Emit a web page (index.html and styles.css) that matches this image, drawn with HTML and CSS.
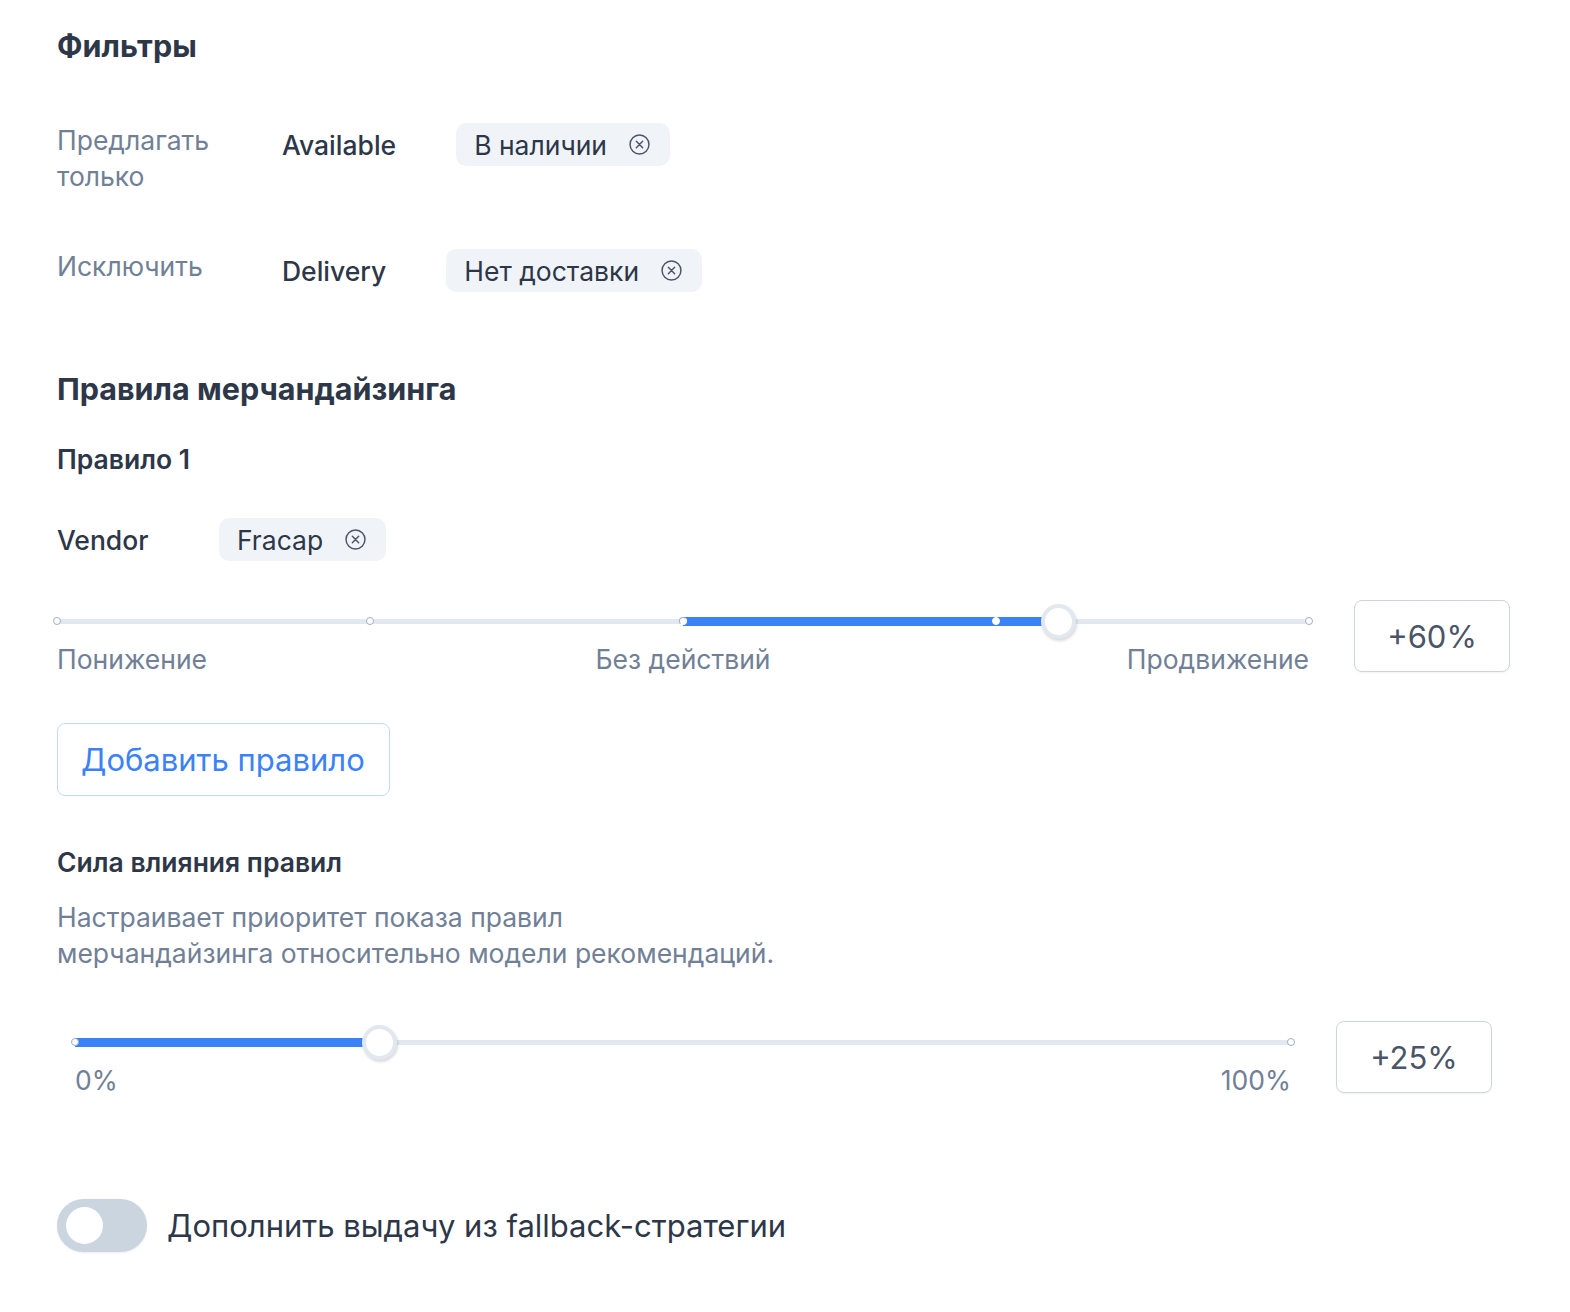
FILE: index.html
```html
<!DOCTYPE html>
<html lang="ru">

<head>
  <meta charset="UTF-8">
  <meta name="viewport" content="width=device-width, initial-scale=1.0">
  <title>Фильтры и правила</title>
  <link rel="stylesheet" href="styles.css">
</head>

<body>
  <div class="page">
    <h2 class="section-title">Фильтры</h2>

    <div class="filter-row">
      <div class="filter-label">Предлагать только</div>
      <div class="filter-value">
        <span class="field-name">Available</span>
        <span class="chip">В наличии
          <svg class="chip-x" viewBox="0 0 20 20"><circle cx="10" cy="10" r="9" /><path d="M7 7l6 6M13 7l-6 6" /></svg>
        </span>
      </div>
    </div>

    <div class="filter-row">
      <div class="filter-label">Исключить</div>
      <div class="filter-value">
        <span class="field-name">Delivery</span>
        <span class="chip">Нет доставки
          <svg class="chip-x" viewBox="0 0 20 20"><circle cx="10" cy="10" r="9" /><path d="M7 7l6 6M13 7l-6 6" /></svg>
        </span>
      </div>
    </div>

    <h2 class="section-title rules-title">Правила мерчандайзинга</h2>
    <h3 class="rule-title">Правило 1</h3>

    <div class="vendor-row">
      <span class="field-name vendor-name">Vendor</span>
      <span class="chip">Fracap
        <svg class="chip-x" viewBox="0 0 20 20"><circle cx="10" cy="10" r="9" /><path d="M7 7l6 6M13 7l-6 6" /></svg>
      </span>
    </div>

    <div class="slider-row">
      <div class="slider">
        <div class="track-wrap">
          <div class="track">
            <div class="fill" style="left: 50%; width: 30%;"></div>
            <span class="dot" style="left: 0%;"></span>
            <span class="dot" style="left: 25%;"></span>
            <span class="dot half" style="left: 50%;"></span>
            <span class="dot on" style="left: 75%;"></span>
            <span class="dot" style="left: 100%;"></span>
            <span class="thumb" style="left: 80%;"></span>
          </div>
        </div>
        <div class="slider-labels three">
          <span>Понижение</span>
          <span>Без действий</span>
          <span>Продвижение</span>
        </div>
      </div>
      <div class="value-box">+60%</div>
    </div>

    <button class="add-rule">Добавить правило</button>

    <h3 class="rule-title power-title">Сила влияния правил</h3>
    <p class="description">Настраивает приоритет показа правил<br>мерчандайзинга относительно модели рекомендаций.</p>

    <div class="slider-row power-row">
      <div class="slider">
        <div class="track-wrap">
          <div class="track">
            <div class="fill" style="left: 0%; width: 25%;"></div>
            <span class="dot" style="left: 0%;"></span>
            <span class="dot" style="left: 100%;"></span>
            <span class="thumb" style="left: 25%;"></span>
          </div>
        </div>
        <div class="slider-labels">
          <span>0%</span>
          <span>100%</span>
        </div>
      </div>
      <div class="value-box">+25%</div>
    </div>

    <label class="toggle-row">
      <span class="toggle"><span class="knob"></span></span>
      <span class="toggle-text">Дополнить выдачу из fallback-стратегии</span>
    </label>
  </div>
</body>

</html>
```

FILE: styles.css
```css
body {
  margin: 0;
  font-family: Inter, "Noto Sans", sans-serif;
  color: #2d3748;
  background-color: #fff;
}

.page {
  width: 1453px;
  padding: 28px 0 40px 57px;
}

.section-title {
  margin: 0;
  font-size: 30.5px;
  line-height: 36px;
  font-weight: 700;
}

.filter-row {
  display: flex;
  align-items: flex-start;
  gap: 60px;
  margin-top: 58px;
}

.filter-row + .filter-row {
  margin-top: 54px;
}

.filter-label {
  width: 165px;
  font-size: 26.5px;
  line-height: 36px;
  color: #718096;
}

.filter-value {
  display: flex;
  align-items: center;
  gap: 60px;
  height: 43px;
  margin-top: 1px;
}

.field-name {
  font-size: 26.5px;
  font-weight: 500;
}

.chip {
  display: inline-flex;
  align-items: center;
  gap: 22px;
  height: 43px;
  padding: 0 20px 0 18px;
  border-radius: 10px;
  background-color: #f0f4f8;
  font-size: 26.5px;
  color: #2d3748;
}

.chip-x {
  width: 21px;
  height: 21px;
  fill: none;
  stroke: #4a5568;
  stroke-width: 1.4;
  stroke-linecap: round;
}

.rules-title {
  margin-top: 79px;
}

.rule-title {
  margin: 36px 0 0;
  font-size: 26.5px;
  line-height: 32px;
  font-weight: 600;
}

.vendor-row {
  display: flex;
  align-items: center;
  margin-top: 43px;
}

.vendor-name {
  width: 162px;
}

/* slider */
.slider-row {
  display: flex;
  align-items: flex-start;
  gap: 45px;
  margin-top: 42px;
}

.slider {
  flex: 1;
}

.track-wrap {
  height: 36px;
  display: flex;
  align-items: center;
}

.track {
  position: relative;
  width: 100%;
  height: 5px;
  background-color: #e2e8f0;
  border-radius: 3px;
}

.fill {
  position: absolute;
  top: -2px;
  height: 9px;
  background-color: #3b82f6;
}

.dot {
  position: absolute;
  top: 50%;
  width: 8px;
  height: 8px;
  margin: -4px 0 0 -4px;
  box-sizing: border-box;
  border: 1px solid #a0aec0;
  border-radius: 50%;
  background-color: #fff;
}

.dot.on {
  border-color: #fff;
}

.dot.half {
  border-color: #a0aec0 #fff #fff #a0aec0;
}

.thumb {
  position: absolute;
  top: 50%;
  width: 35px;
  height: 35px;
  margin: -17.5px 0 0 -17.5px;
  box-sizing: border-box;
  border: 4px solid #e2e8f0;
  border-radius: 50%;
  background-color: #fff;
  box-shadow: 1px 2px 3px rgba(0, 0, 0, 0.15);
}

.slider-labels {
  display: flex;
  justify-content: space-between;
  margin-top: 2px;
  font-size: 26.5px;
  line-height: 36px;
  color: #718096;
}

.slider-labels.three {
  display: grid;
  grid-template-columns: 1fr auto 1fr;
}

.slider-labels.three span:last-child {
  justify-self: end;
}

.value-box {
  width: 156px;
  height: 72px;
  margin-top: -3px;
  box-sizing: border-box;
  display: flex;
  align-items: center;
  justify-content: center;
  border: 1px solid #cbd5e0;
  border-radius: 8px;
  box-shadow: 0 1px 2px rgba(0, 0, 0, 0.05);
  font-size: 31px;
  color: #4a5568;
}

.add-rule {
  display: block;
  margin-top: 46px;
  height: 73px;
  padding: 0 24px 0 23px;
  border: 1px solid #bfdbfe;
  border-radius: 8px;
  background-color: #fff;
  font-family: inherit;
  font-size: 31px;
  color: #3b82f6;
  cursor: pointer;
}

.power-title {
  margin-top: 50px;
}

.description {
  margin: 21px 0 0;
  font-size: 26.5px;
  line-height: 36px;
  color: #718096;
}

.power-row {
  margin: 53px 18px 0;
}

/* toggle */
.toggle-row {
  display: flex;
  align-items: center;
  gap: 20px;
  margin-top: 101px;
  cursor: pointer;
}

.toggle {
  position: relative;
  width: 90px;
  height: 53px;
  border-radius: 27px;
  background-color: #cbd5e0;
  box-shadow: 0 1px 2px rgba(0, 0, 0, 0.08);
}

.knob {
  position: absolute;
  left: 9px;
  top: 8px;
  width: 37px;
  height: 37px;
  border-radius: 50%;
  background-color: #fff;
}

.toggle-text {
  font-size: 31px;
  color: #2d3748;
}
```
